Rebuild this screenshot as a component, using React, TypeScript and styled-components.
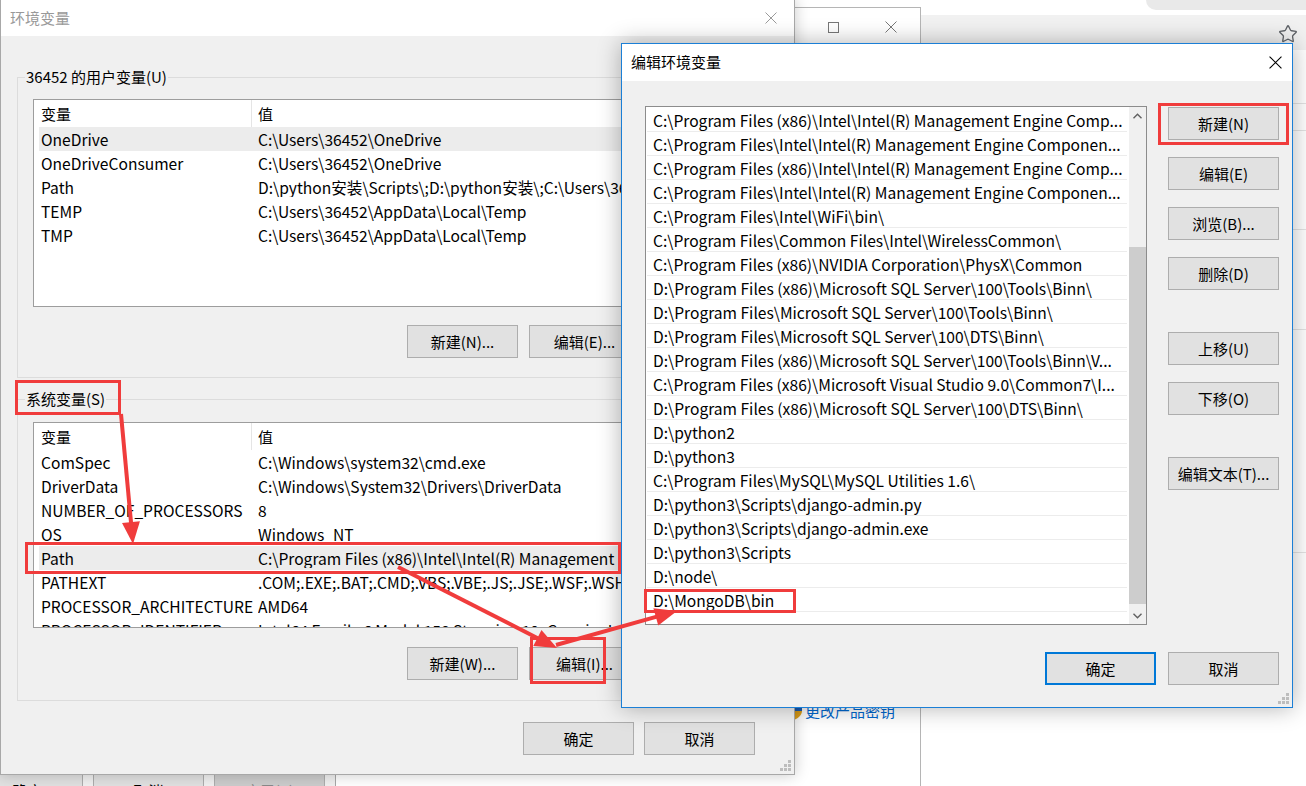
import React from 'react';
import styled, { createGlobalStyle } from 'styled-components';
import { Star } from 'lucide-react';

const FONT = `"Noto Sans CJK SC", "Noto Sans", sans-serif`;

const GlobalStyle = createGlobalStyle`
  * { box-sizing: border-box; }
  html, body { margin: 0; padding: 0; background: #fff; }
  body { font-family: ${FONT}; font-size: 15px; color: #000; overflow: hidden; }
`;

const Desktop = styled.div`
  position: relative;
  width: 1306px;
  height: 786px;
  overflow: hidden;
  background: #fff;
`;

/* ---------- browser window at the back ---------- */
const BrowserWindow = styled.div`
  position: absolute;
  left: 900px;
  top: 0;
  width: 406px;
  height: 786px;
  display: flex;
  flex-direction: column;
  background: #fff;
`;

const TabStrip = styled.div`
  height: 15px;
  display: flex;
  justify-content: flex-end;
  flex-shrink: 0;
`;

const AddressPill = styled.div`
  width: 160px;
  height: 10px;
  background: #e9e9e9;
  border-bottom-left-radius: 10px;
`;

const Toolbar = styled.div`
  height: 35px;
  background: #f1f1f1;
  display: flex;
  align-items: center;
  justify-content: flex-end;
  padding: 3px 8px 0 0;
  flex-shrink: 0;
  color: #5f6368;
`;

const PageBand = styled.div<{ $h: number }>`
  height: ${(p) => p.$h}px;
  border-bottom: 1px solid #e3e3e3;
  flex-shrink: 0;
`;

/* ---------- control panel window ---------- */
const PanelWindow = styled.div`
  position: absolute;
  left: 300px;
  top: 7px;
  width: 621px;
  height: 800px;
  background: #fff;
  border: 1px solid #b5b5b5;
  display: flex;
  flex-direction: column;
`;

const PanelTitle = styled.div`
  height: 38px;
  display: flex;
  justify-content: flex-end;
  flex-shrink: 0;
`;

const CaptionBtn = styled.div`
  width: 58px;
  height: 38px;
  display: flex;
  align-items: center;
  justify-content: center;
  color: #777;
`;

const PanelBody = styled.div`
  padding: 655px 0 0 486px;
`;

const KeyLink = styled.div`
  display: flex;
  align-items: center;
  gap: 2px;
  height: 20px;
  color: #0066cc;
  font-size: 15px;
  line-height: 20px;
`;

/* ---------- system properties window (bottom left) ---------- */
const PropsWindow = styled.div`
  position: absolute;
  left: -40px;
  top: 740px;
  width: 376px;
  height: 60px;
  background: #f0f0f0;
  border-right: 1px solid #a8a8a8;
  display: flex;
  justify-content: flex-end;
  align-items: flex-start;
  gap: 10px;
  padding: 34px 10px 0 0;
`;

/* ---------- shared window parts ---------- */
const TitleBar = styled.div<{ $h: number }>`
  height: ${(p) => p.$h}px;
  background: #fff;
  display: flex;
  align-items: center;
  justify-content: space-between;
  padding-left: 9px;
  flex-shrink: 0;
`;

const TitleText = styled.span<{ $inactive?: boolean }>`
  font-size: 15px;
  line-height: 20px;
  margin-top: -1px;
  color: ${(p) => (p.$inactive ? '#999' : '#000')};
`;

const CloseBtn = styled.div<{ $w: number; $color: string }>`
  width: ${(p) => p.$w}px;
  height: 100%;
  display: flex;
  align-items: center;
  justify-content: center;
  color: ${(p) => p.$color};
`;

const Btn = styled.button<{ $primary?: boolean; $disabled?: boolean; $spaced?: boolean }>`
  width: 111px;
  height: 33px;
  flex-shrink: 0;
  padding: 0;
  margin: ${(p) => (p.$spaced ? '25px 0 0' : '0')};
  display: flex;
  align-items: center;
  justify-content: center;
  font-family: ${FONT};
  font-size: 15px;
  line-height: 20px;
  color: ${(p) => (p.$disabled ? '#8a8a8a' : '#000')};
  background: ${(p) => (p.$disabled ? '#cccccc' : '#e1e1e1')};
  border: 1px solid ${(p) => (p.$primary ? '#0078d7' : '#adadad')};
  box-shadow: ${(p) => (p.$primary ? 'inset 0 0 0 1px #0078d7' : 'none')};
`;

const Grip = styled.div`
  position: absolute;
  right: 3px;
  bottom: 3px;
  width: 11px;
  height: 11px;
  line-height: 0;
`;

/* ---------- main 环境变量 window ---------- */
const MainWindow = styled.div`
  position: absolute;
  left: 0;
  top: -1px;
  width: 795px;
  height: 776px;
  border: 1px solid #a8a8a8;
  background: #f0f0f0;
  display: flex;
  flex-direction: column;
  box-shadow: 0 0 14px rgba(0, 0, 0, 0.22);
`;

const MainBody = styled.div`
  flex: 1;
  background: #f0f0f0;
  padding: 31px 16px 0 16px;
  display: flex;
  flex-direction: column;
`;

const Group = styled.fieldset<{ $top: number; $padTop: number; $padBottom: number }>`
  margin: ${(p) => p.$top}px 0 0 0;
  min-width: 0;
  padding: ${(p) => p.$padTop}px 15px ${(p) => p.$padBottom}px;
  border: 1px solid #dcdcdc;
`;

const GroupLabel = styled.legend`
  margin-left: -8px;
  padding: 0 1px;
  font-size: 15px;
  line-height: 20px;
`;

const VarList = styled.div<{ $h: number }>`
  height: ${(p) => p.$h}px;
  background: #fff;
  border: 1px solid #9d9d9d;
  overflow: hidden;
`;

const ListHeader = styled.div`
  display: grid;
  grid-template-columns: 212px 1fr;
  height: 27px;
  margin-left: 5px;
  align-items: center;
`;

const HeaderCell = styled.div<{ $divider?: boolean }>`
  height: 100%;
  display: flex;
  align-items: center;
  padding-left: ${(p) => (p.$divider ? '6px' : '2px')};
  border-left: ${(p) => (p.$divider ? '1px solid #e5e5e5' : 'none')};
`;

const VarRow = styled.div<{ $selected?: boolean }>`
  display: grid;
  grid-template-columns: 219px 1fr;
  height: 24px;
  margin-left: 5px;
  align-items: center;
  background: ${(p) => (p.$selected ? '#ececec' : 'transparent')};
  white-space: nowrap;
  font-size: 15.6px;
  line-height: 20px;
`;

const Cell = styled.div<{ $first?: boolean }>`
  overflow: hidden;
  padding-left: ${(p) => (p.$first ? '2px' : '0')};
`;

const ButtonRow = styled.div<{ $top: number; $right?: number; $gap: number }>`
  display: flex;
  justify-content: flex-end;
  gap: ${(p) => p.$gap}px;
  margin-top: ${(p) => p.$top}px;
  padding-right: ${(p) => p.$right ?? 0}px;
`;

/* ---------- 编辑环境变量 dialog ---------- */
const EditDialog = styled.div`
  position: absolute;
  left: 621px;
  top: 43px;
  width: 672px;
  height: 665px;
  border: 1px solid #1b7fd6;
  background: #f0f0f0;
  display: flex;
  flex-direction: column;
  box-shadow: 0 0 22px rgba(0, 0, 0, 0.3);
`;

const EditBody = styled.div`
  flex: 1;
  padding: 25px 13px 0 23px;
  display: flex;
  flex-direction: column;
`;

const EditMain = styled.div`
  display: flex;
  gap: 21px;
`;

const PathList = styled.div`
  width: 502px;
  height: 519px;
  background: #fff;
  border: 1px solid #8c8c8c;
  display: flex;
`;

const PathRows = styled.div`
  flex: 1;
  padding: 1px 2px 0 1px;
  overflow: hidden;
`;

const PathRow = styled.div`
  height: 24px;
  border-bottom: 1px solid #ececec;
  padding-left: 6px;
  display: flex;
  align-items: center;
  white-space: nowrap;
  font-size: 15.6px;
  line-height: 20px;
`;

const ScrollBar = styled.div`
  width: 17px;
  background: #f0f0f0;
  display: flex;
  flex-direction: column;
`;

const ScrollArrow = styled.div`
  height: 17px;
  display: flex;
  align-items: center;
  justify-content: center;
  flex-shrink: 0;
`;

const ScrollTrack = styled.div`
  flex: 1;
  padding-top: 123px;
`;

const ScrollThumb = styled.div`
  height: 357px;
  background: #cdcdcd;
`;

const ButtonColumn = styled.div`
  display: flex;
  flex-direction: column;
  gap: 17px;
  padding-top: 1px;
`;

const Annotations = styled.svg`
  position: absolute;
  left: 0;
  top: 0;
  pointer-events: none;
`;

/* ---------- data ---------- */
const userVars: [string, string][] = [
  ['OneDrive', 'C:\\Users\\36452\\OneDrive'],
  ['OneDriveConsumer', 'C:\\Users\\36452\\OneDrive'],
  ['Path', 'D:\\python安装\\Scripts\\;D:\\python安装\\;C:\\Users\\36452\\AppData\\Local\\Microsoft\\WindowsApps;'],
  ['TEMP', 'C:\\Users\\36452\\AppData\\Local\\Temp'],
  ['TMP', 'C:\\Users\\36452\\AppData\\Local\\Temp'],
];

const sysVars: [string, string][] = [
  ['ComSpec', 'C:\\Windows\\system32\\cmd.exe'],
  ['DriverData', 'C:\\Windows\\System32\\Drivers\\DriverData'],
  ['NUMBER_OF_PROCESSORS', '8'],
  ['OS', 'Windows_NT'],
  ['Path', 'C:\\Program Files (x86)\\Intel\\Intel(R) Management'],
  ['PATHEXT', '.COM;.EXE;.BAT;.CMD;.VBS;.VBE;.JS;.JSE;.WSF;.WSH;.MSC'],
  ['PROCESSOR_ARCHITECTURE', 'AMD64'],
  ['PROCESSOR_IDENTIFIER', 'Intel64 Family 6 Model 158 Stepping 10, GenuineIntel'],
];

const paths = [
  'C:\\Program Files (x86)\\Intel\\Intel(R) Management Engine Comp...',
  'C:\\Program Files\\Intel\\Intel(R) Management Engine Componen...',
  'C:\\Program Files (x86)\\Intel\\Intel(R) Management Engine Comp...',
  'C:\\Program Files\\Intel\\Intel(R) Management Engine Componen...',
  'C:\\Program Files\\Intel\\WiFi\\bin\\',
  'C:\\Program Files\\Common Files\\Intel\\WirelessCommon\\',
  'C:\\Program Files (x86)\\NVIDIA Corporation\\PhysX\\Common',
  'D:\\Program Files (x86)\\Microsoft SQL Server\\100\\Tools\\Binn\\',
  'D:\\Program Files\\Microsoft SQL Server\\100\\Tools\\Binn\\',
  'D:\\Program Files\\Microsoft SQL Server\\100\\DTS\\Binn\\',
  'D:\\Program Files (x86)\\Microsoft SQL Server\\100\\Tools\\Binn\\V...',
  'C:\\Program Files (x86)\\Microsoft Visual Studio 9.0\\Common7\\I...',
  'D:\\Program Files (x86)\\Microsoft SQL Server\\100\\DTS\\Binn\\',
  'D:\\python2',
  'D:\\python3',
  'C:\\Program Files\\MySQL\\MySQL Utilities 1.6\\',
  'D:\\python3\\Scripts\\django-admin.py',
  'D:\\python3\\Scripts\\django-admin.exe',
  'D:\\python3\\Scripts',
  'D:\\node\\',
  'D:\\MongoDB\\bin',
];

/* ---------- small drawings ---------- */
const CloseIcon = ({ size = 12 }: { size?: number }) => (
  <svg width={size} height={size} viewBox="0 0 12 12">
    <path d="M0.5 0.5L11.5 11.5M11.5 0.5L0.5 11.5" stroke="currentColor" strokeWidth="1" fill="none" />
  </svg>
);

const MaxIcon = () => (
  <svg width="11" height="11" viewBox="0 0 11 11">
    <rect x="0.5" y="0.5" width="10" height="10" stroke="currentColor" fill="none" />
  </svg>
);

const Chevron = ({ up }: { up?: boolean }) => (
  <svg width="9" height="6" viewBox="0 0 9 6">
    <path d={up ? 'M0.5 5.2L4.5 1.2L8.5 5.2' : 'M0.5 0.8L4.5 4.8L8.5 0.8'} stroke="#606060" strokeWidth="1.4" fill="none" />
  </svg>
);

const GripIcon = () => (
  <svg width="11" height="11" viewBox="0 0 11 11">
    {[
      [8, 0],
      [8, 4],
      [4, 4],
      [8, 8],
      [4, 8],
      [0, 8],
    ].map(([x, y]) => (
      <rect key={`${x}-${y}`} x={x} y={y} width="3" height="3" fill="#bdbdbd" />
    ))}
  </svg>
);

const Shield = () => (
  <svg width="16" height="18" viewBox="0 0 16 18">
    <path d="M8 0.5L1 3v6h7z" fill="#e3a21a" />
    <path d="M8 0.5L15 3v6H8z" fill="#1d5fb8" />
    <path d="M1 9c0.3 4 3 6.6 7 8.5V9z" fill="#1d5fb8" />
    <path d="M15 9c-0.3 4-3 6.6-7 8.5V9z" fill="#e3a21a" />
  </svg>
);

const RED = '#f03c3c';

const Arrow = ({ x1, y1, x2, y2 }: { x1: number; y1: number; x2: number; y2: number }) => {
  const len = 22;
  const half = 9;
  const dx = x2 - x1;
  const dy = y2 - y1;
  const d = Math.hypot(dx, dy);
  const ux = dx / d;
  const uy = dy / d;
  const bx = x2 - ux * len;
  const by = y2 - uy * len;
  const px = -uy;
  const py = ux;
  const head = `${x2},${y2} ${bx + px * half},${by + py * half} ${bx - px * half},${by - py * half}`;
  return (
    <g>
      <line x1={x1} y1={y1} x2={bx + ux * 2} y2={by + uy * 2} stroke={RED} strokeWidth="4" />
      <polygon points={head} fill={RED} />
    </g>
  );
};

const VarTable = ({ rows, height, selected }: { rows: [string, string][]; height: number; selected: number }) => (
  <VarList $h={height}>
    <ListHeader>
      <HeaderCell>变量</HeaderCell>
      <HeaderCell $divider>值</HeaderCell>
    </ListHeader>
    {rows.map(([name, value], i) => (
      <VarRow key={name} $selected={i === selected}>
        <Cell $first>{name}</Cell>
        <Cell>{value}</Cell>
      </VarRow>
    ))}
  </VarList>
);

export default function App() {
  return (
    <Desktop>
      <GlobalStyle />

      <BrowserWindow>
        <TabStrip>
          <AddressPill />
        </TabStrip>
        <Toolbar>
          <Star size={20} strokeWidth={1.6} />
        </Toolbar>
        <PageBand $h={54} />
        <PageBand $h={27} />
        <PageBand $h={99} />
        <PageBand $h={100} />
        <PageBand $h={223} />
      </BrowserWindow>

      <PanelWindow>
        <PanelTitle>
          <CaptionBtn>
            <MaxIcon />
          </CaptionBtn>
          <CaptionBtn>
            <CloseIcon />
          </CaptionBtn>
        </PanelTitle>
        <PanelBody>
          <KeyLink>
            <Shield />
            更改产品密钥
          </KeyLink>
        </PanelBody>
      </PanelWindow>

      <PropsWindow>
        <Btn>确定</Btn>
        <Btn>取消</Btn>
        <Btn $disabled>应用(A)</Btn>
      </PropsWindow>

      <MainWindow>
        <TitleBar $h={36}>
          <TitleText $inactive>环境变量</TitleText>
          <CloseBtn $w={46} $color="#9a9a9a">
            <CloseIcon />
          </CloseBtn>
        </TitleBar>
        <MainBody>
          <Group $top={0} $padTop={12} $padBottom={19}>
            <GroupLabel>36452 的用户变量(U)</GroupLabel>
            <VarTable rows={userVars} height={208} selected={0} />
            <ButtonRow $top={18} $gap={11}>
              <Btn>新建(N)...</Btn>
              <Btn>编辑(E)...</Btn>
              <Btn>删除(D)</Btn>
            </ButtonRow>
          </Group>
          <Group $top={11} $padTop={13} $padBottom={20}>
            <GroupLabel>系统变量(S)</GroupLabel>
            <VarTable rows={sysVars} height={206} selected={4} />
            <ButtonRow $top={19} $gap={11}>
              <Btn>新建(W)...</Btn>
              <Btn>编辑(I)...</Btn>
              <Btn>删除(L)</Btn>
            </ButtonRow>
          </Group>
          <ButtonRow $top={21} $gap={10} $right={23}>
            <Btn>确定</Btn>
            <Btn>取消</Btn>
          </ButtonRow>
        </MainBody>
        <Grip>
          <GripIcon />
        </Grip>
      </MainWindow>

      <EditDialog>
        <TitleBar $h={37}>
          <TitleText>编辑环境变量</TitleText>
          <CloseBtn $w={34} $color="#000">
            <CloseIcon size={13} />
          </CloseBtn>
        </TitleBar>
        <EditBody>
          <EditMain>
            <PathList>
              <PathRows>
                {paths.map((p, i) => (
                  <PathRow key={i}>{p}</PathRow>
                ))}
              </PathRows>
              <ScrollBar>
                <ScrollArrow>
                  <Chevron up />
                </ScrollArrow>
                <ScrollTrack>
                  <ScrollThumb />
                </ScrollTrack>
                <ScrollArrow>
                  <Chevron />
                </ScrollArrow>
              </ScrollBar>
            </PathList>
            <ButtonColumn>
              <Btn>新建(N)</Btn>
              <Btn>编辑(E)</Btn>
              <Btn>浏览(B)...</Btn>
              <Btn>删除(D)</Btn>
              <Btn $spaced>上移(U)</Btn>
              <Btn>下移(O)</Btn>
              <Btn $spaced>编辑文本(T)...</Btn>
            </ButtonColumn>
          </EditMain>
          <ButtonRow $top={27} $gap={12}>
            <Btn $primary>确定</Btn>
            <Btn>取消</Btn>
          </ButtonRow>
        </EditBody>
        <Grip>
          <GripIcon />
        </Grip>
      </EditDialog>

      <Annotations width="1306" height="786" viewBox="0 0 1306 786">
        <g fill="none" stroke={RED} strokeWidth="3">
          <rect x="16.5" y="381.5" width="103" height="32" />
          <rect x="26.5" y="543.5" width="593" height="29" />
          <rect x="531.5" y="638.5" width="73" height="44" />
          <rect x="645.5" y="590.5" width="149" height="21" />
          <rect x="1159.5" y="104.5" width="128" height="39" />
        </g>
        <Arrow x1={121} y1={414} x2={133} y2={544} />
        <Arrow x1={398} y1={567} x2={557} y2={648} />
        <Arrow x1={556} y1={645} x2={677} y2={611} />
      </Annotations>
    </Desktop>
  );
}
